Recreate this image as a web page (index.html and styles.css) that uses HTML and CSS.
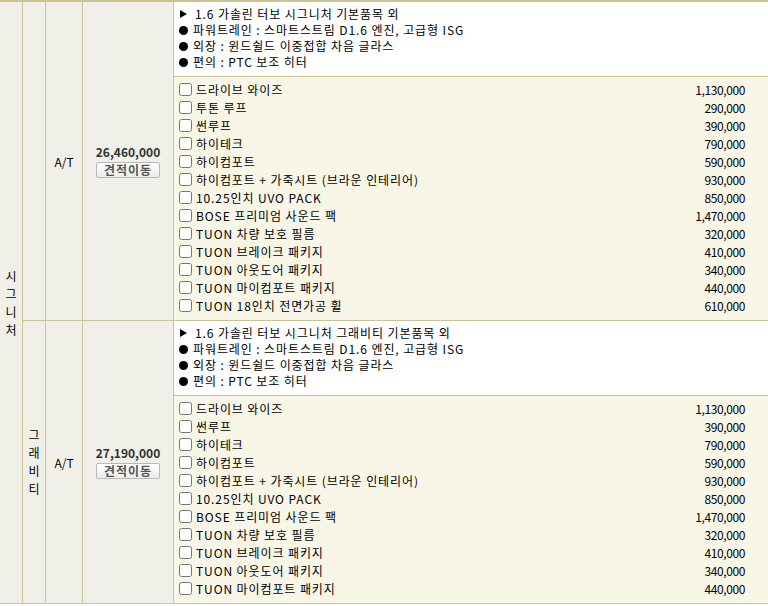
FILE: index.html
```html
<html>
<head>
<meta charset="utf-8">
<link rel="stylesheet" href="styles.css">
</head>
<body>
<div class="trims">
	<div class="cell model">시<br>그<br>니<br>처</div>

	<div class="cell trim"></div>
	<div class="cell gear">A/T</div>
	<div class="cell price">
		<strong>26,460,000</strong>
		<button class="go">견적이동</button>
	</div>
	<div class="cell detail">
		<div class="basic">
			<p><span class="tri"></span>1.6 가솔린 터보 시그니처 기본품목 외</p>
			<p><span class="dot"></span>파워트레인 : 스마트스트림 D1.6 엔진, 고급형 ISG</p>
			<p><span class="dot"></span>외장 : 윈드쉴드 이중접합 차음 글라스</p>
			<p><span class="dot"></span>편의 : PTC 보조 히터</p>
		</div>
		<ul class="opts">
			<li><label><input type="checkbox">드라이브 와이즈</label><span>1,130,000</span></li>
			<li><label><input type="checkbox">투톤 루프</label><span>290,000</span></li>
			<li><label><input type="checkbox">썬루프</label><span>390,000</span></li>
			<li><label><input type="checkbox">하이테크</label><span>790,000</span></li>
			<li><label><input type="checkbox">하이컴포트</label><span>590,000</span></li>
			<li><label><input type="checkbox">하이컴포트 + 가죽시트 (브라운 인테리어)</label><span>930,000</span></li>
			<li><label><input type="checkbox">10.25인치 UVO PACK</label><span>850,000</span></li>
			<li><label><input type="checkbox">BOSE 프리미엄 사운드 팩</label><span>1,470,000</span></li>
			<li><label><input type="checkbox">TUON 차량 보호 필름</label><span>320,000</span></li>
			<li><label><input type="checkbox">TUON 브레이크 패키지</label><span>410,000</span></li>
			<li><label><input type="checkbox">TUON 아웃도어 패키지</label><span>340,000</span></li>
			<li><label><input type="checkbox">TUON 마이컴포트 패키지</label><span>440,000</span></li>
			<li><label><input type="checkbox">TUON 18인치 전면가공 휠</label><span>610,000</span></li>
		</ul>
	</div>

	<div class="cell trim last">그<br>래<br>비<br>티</div>
	<div class="cell gear last">A/T</div>
	<div class="cell price last">
		<strong>27,190,000</strong>
		<button class="go">견적이동</button>
	</div>
	<div class="cell detail last">
		<div class="basic">
			<p><span class="tri"></span>1.6 가솔린 터보 시그니처 그래비티 기본품목 외</p>
			<p><span class="dot"></span>파워트레인 : 스마트스트림 D1.6 엔진, 고급형 ISG</p>
			<p><span class="dot"></span>외장 : 윈드쉴드 이중접합 차음 글라스</p>
			<p><span class="dot"></span>편의 : PTC 보조 히터</p>
		</div>
		<ul class="opts">
			<li><label><input type="checkbox">드라이브 와이즈</label><span>1,130,000</span></li>
			<li><label><input type="checkbox">썬루프</label><span>390,000</span></li>
			<li><label><input type="checkbox">하이테크</label><span>790,000</span></li>
			<li><label><input type="checkbox">하이컴포트</label><span>590,000</span></li>
			<li><label><input type="checkbox">하이컴포트 + 가죽시트 (브라운 인테리어)</label><span>930,000</span></li>
			<li><label><input type="checkbox">10.25인치 UVO PACK</label><span>850,000</span></li>
			<li><label><input type="checkbox">BOSE 프리미엄 사운드 팩</label><span>1,470,000</span></li>
			<li><label><input type="checkbox">TUON 차량 보호 필름</label><span>320,000</span></li>
			<li><label><input type="checkbox">TUON 브레이크 패키지</label><span>410,000</span></li>
			<li><label><input type="checkbox">TUON 아웃도어 패키지</label><span>340,000</span></li>
			<li><label><input type="checkbox">TUON 마이컴포트 패키지</label><span>440,000</span></li>
		</ul>
	</div>
</div>
</body>
</html>
```

FILE: styles.css
```css
body {
	margin: 0;
	font-family: "Noto Sans CJK KR", sans-serif;
	font-size: 12px;
	color: #000;
	background: #fff;
}

.trims {
	display: grid;
	grid-template-columns: 23px 23px 37px 91px 1fr;
	width: 768px;
	border-top: 2px solid #cbc395;
}

.cell {
	box-sizing: border-box;
	border-right: 1px solid #cbc395;
	border-bottom: 1px solid #cbc395;
	background: #f1f0e8;
	display: flex;
	flex-direction: column;
	align-items: center;
	justify-content: center;
	text-align: center;
}

.model {
	grid-row: 1 / 3;
	line-height: 18px;
}

.trim {
	line-height: 18px;
}

.price strong {
	color: #333;
	font-size: 12px;
	line-height: 14px;
}

.go {
	margin: 3px 0 0;
	width: 64px;
	height: 16px;
	padding: 0;
	font-family: inherit;
	font-size: 12px;
	font-weight: bold;
	line-height: 14px;
	letter-spacing: 1px;
	color: #555;
	border: 1px solid #b8b8b8;
	border-radius: 2px;
	background: linear-gradient(#fff, #ebebeb);
}

.detail {
	border-right: 0;
	display: block;
	text-align: left;
	background: #f8f6e7;
}

.basic {
	background: #fff;
	border-bottom: 1px solid #cbc395;
	padding: 4px 6px 7px;
	height: 75px;
	box-sizing: border-box;
	letter-spacing: 0.9px;
}

.basic p {
	margin: 0;
	line-height: 16px;
	display: flex;
	align-items: center;
}

.tri {
	width: 0;
	height: 0;
	border-left: 7px solid #000;
	border-top: 4px solid transparent;
	border-bottom: 4px solid transparent;
	margin: 0 8px 0 0;
}

.dot {
	width: 9px;
	height: 9px;
	border-radius: 50%;
	background: #000;
	margin: 0 5px 0 -1px;
}

.opts {
	list-style: none;
	margin: 0;
	padding: 3px 23px 6px 5px;
}

.opts li {
	display: flex;
	justify-content: space-between;
	align-items: center;
	height: 18px;
}

.opts label {
	display: flex;
	align-items: center;
	letter-spacing: 0.9px;
}

.opts li span {
	letter-spacing: -0.4px;
}

.opts input {
	width: 13px;
	height: 13px;
	margin: 0 4px 0 0;
}
```
